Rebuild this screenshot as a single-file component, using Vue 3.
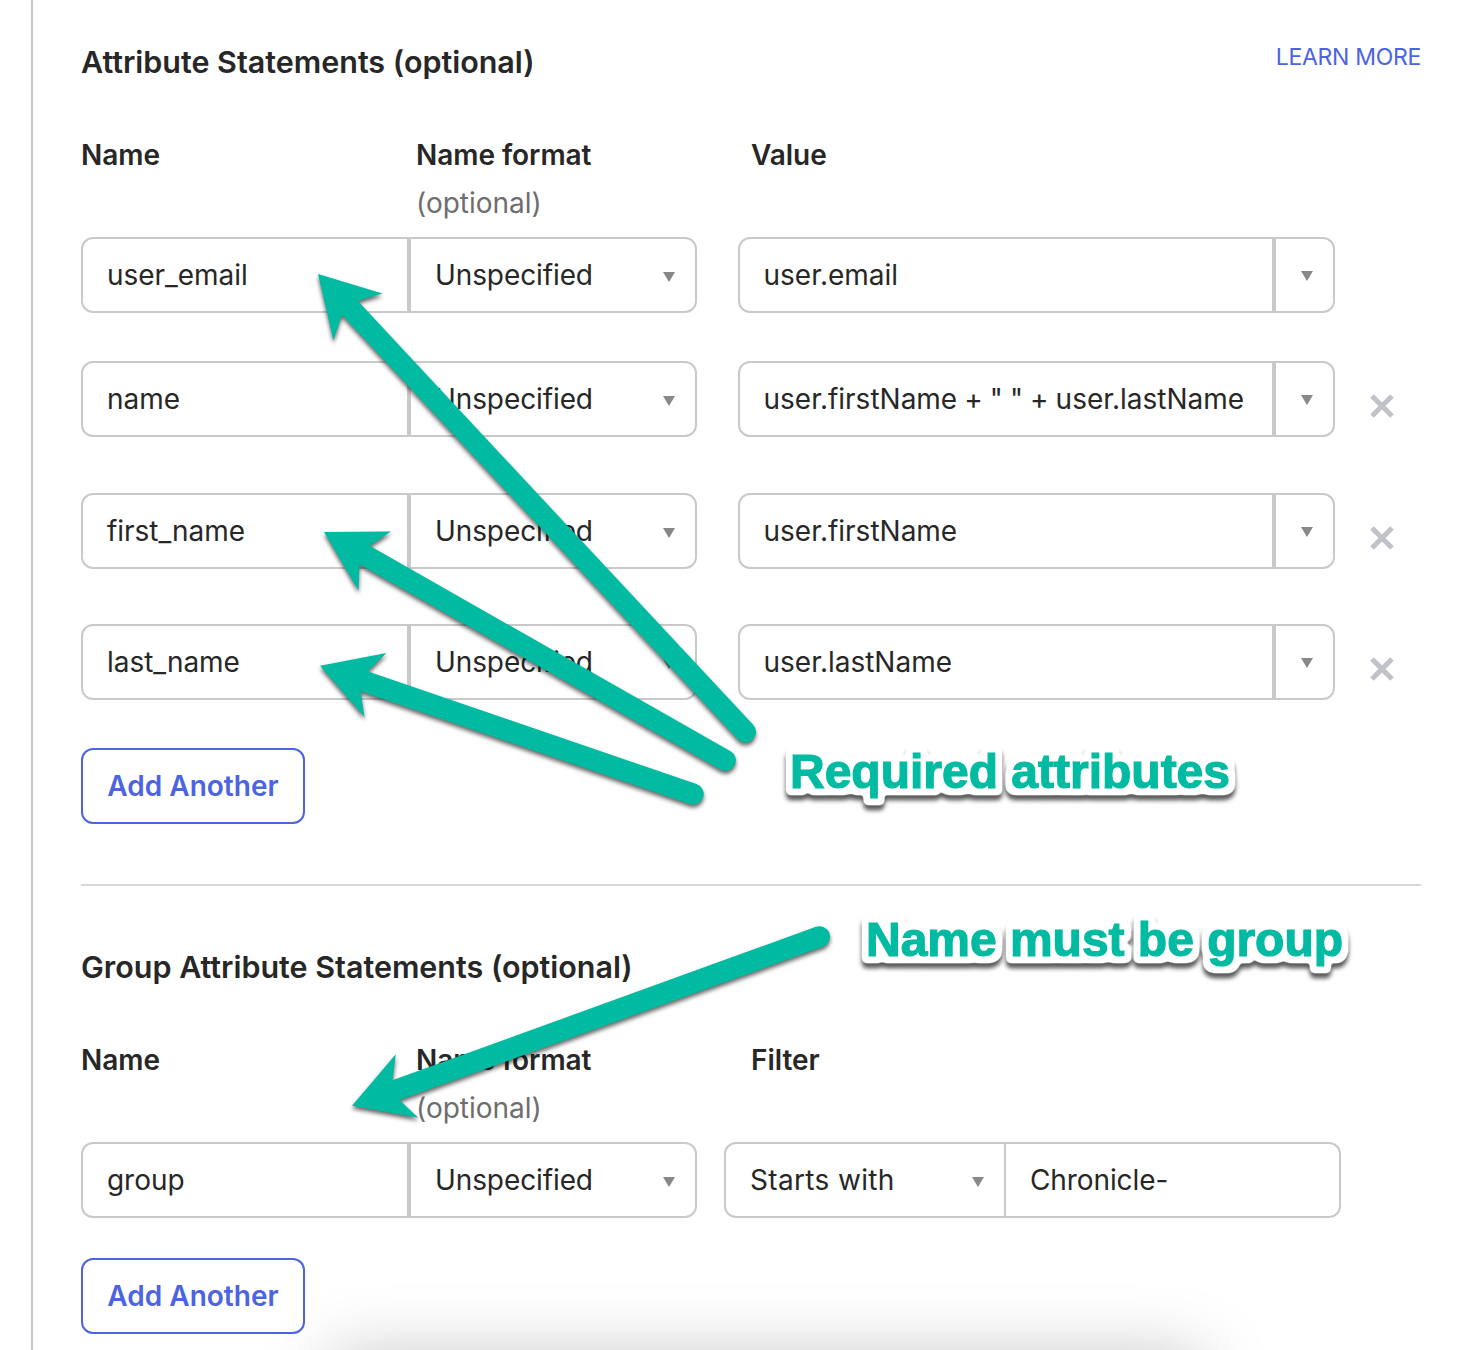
<script setup>
const attributes = [
  { name: 'user_email', value: 'user.email', removable: false },
  { name: 'name', value: 'user.firstName + " " + user.lastName', removable: true },
  { name: 'first_name', value: 'user.firstName', removable: true },
  { name: 'last_name', value: 'user.lastName', removable: true },
]

const arrows = [
  { head: '318,274 382.5,293.5 358,301 342,314.5 333.5,340.5', x1: 350, y1: 308, x2: 745.5, y2: 732 },
  { head: '324,532 391,531.5 369.5,546 359.5,563.5 358.5,590.5', x1: 364.5, y1: 555, x2: 725.4, y2: 760.3 },
  { head: '320,665.8 386.5,653 367.5,671.5 360.5,690.5 364.5,717', x1: 364, y1: 681.3, x2: 693.2, y2: 794 },
  { head: '352,1105.8 395.8,1054.3 392.6,1080.3 399.5,1100 418.4,1117.8', x1: 396, y1: 1090.2, x2: 819.5, y2: 936.7 },
]
</script>

<template>
  <main class="page">
    <div class="panel">
      <section class="statements">
        <header class="heading">
          <h2 class="title">Attribute Statements (optional)</h2>
          <a class="learn">LEARN MORE</a>
        </header>
        <div class="labels">
          <div class="label">Name</div>
          <div class="label">Name format<small>(optional)</small></div>
          <div class="label">Value</div>
        </div>
        <div class="rows">
          <div v-for="row in attributes" :key="row.name" class="row">
            <div class="field name">{{ row.name }}</div>
            <div class="field format">
              <span>Unspecified</span>
              <svg class="caret" width="12" height="10" viewBox="0 0 12 10"><path d="M0 0H12L6 10Z" /></svg>
            </div>
            <div class="field value">{{ row.value }}</div>
            <div class="field picker">
              <svg class="caret" width="12" height="10" viewBox="0 0 12 10"><path d="M0 0H12L6 10Z" /></svg>
            </div>
            <svg v-if="row.removable" class="remove" width="24" height="24" viewBox="0 0 24 24">
              <path d="M2 2L22 22M22 2L2 22" />
            </svg>
          </div>
        </div>
        <button class="add">Add Another</button>
      </section>

      <section class="statements groups">
        <header class="heading">
          <h2 class="title">Group Attribute Statements (optional)</h2>
        </header>
        <div class="labels">
          <div class="label">Name</div>
          <div class="label">Name format<small>(optional)</small></div>
          <div class="label">Filter</div>
        </div>
        <div class="row">
          <div class="field name">group</div>
          <div class="field format">
            <span>Unspecified</span>
            <svg class="caret" width="12" height="10" viewBox="0 0 12 10"><path d="M0 0H12L6 10Z" /></svg>
          </div>
          <div class="field filter">
            <span>Starts with</span>
            <svg class="caret" width="12" height="10" viewBox="0 0 12 10"><path d="M0 0H12L6 10Z" /></svg>
          </div>
          <div class="field pattern">Chronicle-</div>
        </div>
        <button class="add">Add Another</button>
      </section>
    </div>

    <div class="dock-shadow"></div>

    <svg class="annotations" width="1466" height="1350" viewBox="0 0 1466 1350">
      <defs>
        <!-- White rounded halo around the lettering, with a dark shadow below it -->
        <filter id="halo" x="-5%" y="-40%" width="110%" height="190%" color-interpolation-filters="sRGB">
          <feMorphology in="SourceAlpha" operator="dilate" radius="5" result="wide" />
          <feGaussianBlur in="wide" stdDeviation="2" />
          <feComponentTransfer result="shape">
            <feFuncA type="linear" slope="6" intercept="-0.8" />
          </feComponentTransfer>
          <feFlood flood-color="#fff" />
          <feComposite in2="shape" operator="in" result="white" />
          <feGaussianBlur in="shape" stdDeviation="2" />
          <feOffset dy="5" result="soft" />
          <feFlood flood-color="#000" flood-opacity="0.65" />
          <feComposite in2="soft" operator="in" result="shadow" />
          <feMerge>
            <feMergeNode in="shadow" />
            <feMergeNode in="white" />
            <feMergeNode in="SourceGraphic" />
          </feMerge>
        </filter>
      </defs>
      <g v-for="a in arrows" :key="a.head" class="arrow">
        <polygon :points="a.head" />
        <line :x1="a.x1" :y1="a.y1" :x2="a.x2" :y2="a.y2" />
      </g>
      <text class="note" filter="url(#halo)" x="790" y="788" textLength="440">Required attributes</text>
      <text class="note" filter="url(#halo)" x="866" y="956" textLength="477">Name must be group</text>
    </svg>
  </main>
</template>

<style>
body {
  margin: 0;
  background: #fff;
}
</style>

<style scoped>
.page {
  position: relative;
  box-sizing: border-box;
  width: 1466px;
  height: 1350px;
  padding-left: 31px;
  overflow: hidden;
  background: #fff;
  color: #272727;
  font-family: Inter, sans-serif;
  font-size: 28px;
  line-height: 34px;
}
.panel {
  box-sizing: border-box;
  height: 1350px;
  padding: 0 45px 0 48px;
  border-left: 2px solid #c9c9c9;
}
.statements {
  display: flex;
  flex-direction: column;
  align-items: flex-start;
  box-sizing: border-box;
  height: 886px;
  padding-top: 42px;
  border-bottom: 2px solid #d7d7dc;
}
.groups {
  height: 464px;
  padding-top: 61px;
  border-bottom: 0;
}
.heading {
  display: flex;
  justify-content: space-between;
  width: 100%;
  height: 96px;
}
.title {
  margin: 0;
  font-size: 30.5px;
  font-weight: 600;
  line-height: 40px;
  letter-spacing: -0.02px;
}
.learn {
  color: #4c64e1;
  font-size: 23px;
  line-height: 31px;
  letter-spacing: -0.3px;
}
.labels {
  display: flex;
  height: 99px;
}
.label {
  width: 335px;
  font-weight: 600;
  letter-spacing: -0.05px;
}
.label small {
  display: block;
  margin-top: 14px;
  color: #6e6e6e;
  font-size: 28px;
  font-weight: 400;
  letter-spacing: 0;
}
.rows {
  display: flex;
  flex-direction: column;
}
.row {
  display: flex;
  height: 76px;
}
.row + .row {
  margin-top: 56px;
}
.row:nth-child(2) {
  margin-top: 48px;
}
.row:nth-child(4) {
  margin-top: 55px;
}
.field {
  display: flex;
  align-items: center;
  justify-content: space-between;
  box-sizing: border-box;
  height: 76px;
  border: 2px solid #c9c9c9;
  padding: 0 20px 0 24px;
  white-space: nowrap;
}
.name,
.value {
  border-radius: 12px 0 0 12px;
}
.format,
.picker {
  border-radius: 0 12px 12px 0;
}
.name {
  width: 328px;
  letter-spacing: -0.05px;
}
.format {
  width: 288px;
  letter-spacing: -0.1px;
}
.value {
  width: 536px;
  margin-left: 41px;
  padding: 0 0 0 23.5px;
  letter-spacing: -0.01px;
  word-spacing: -0.8px;
}
.picker {
  width: 61px;
  padding: 0 20px 0 25px;
}
.filter {
  width: 282px;
  margin-left: 27px;
  border-radius: 12px 0 0 12px;
  letter-spacing: 0.35px;
}
.pattern {
  width: 335px;
  border-left: 0;
  border-radius: 0 12px 12px 0;
  letter-spacing: -0.1px;
}
.caret {
  flex: none;
  margin-top: 4px;
  fill: #888;
}
.picker .caret {
  margin-top: 2px;
}
.remove {
  margin: 33px 0 0 35px;
  fill: none;
  stroke: #c1c1c8;
  stroke-width: 5;
}
.add {
  flex: none;
  box-sizing: border-box;
  width: 224px;
  height: 76px;
  margin: 48px 0 0;
  padding: 0;
  border: 2px solid #4c64e1;
  border-radius: 12px;
  background: #fff;
  color: #4c64e1;
  font: 600 28px/34px Inter, sans-serif;
}
.groups .add {
  margin-top: 40px;
}
.dock-shadow {
  position: absolute;
  top: 1358px;
  left: 330px;
  width: 870px;
  height: 200px;
  box-shadow: 0 0 70px rgba(0, 0, 0, 0.25);
}
.annotations {
  position: absolute;
  top: 0;
  left: 0;
}
.arrow {
  fill: #00bba1;
  stroke: none;
  filter: drop-shadow(0 3px 2px rgba(0, 0, 0, 0.6));
}
.arrow line {
  stroke: #00bba1;
  stroke-width: 21;
  stroke-linecap: round;
}
.note {
  fill: #00bba1;
  stroke: #00bba1;
  stroke-width: 1.2px;
  font: bold 48px "Liberation Sans", sans-serif;
}
</style>
